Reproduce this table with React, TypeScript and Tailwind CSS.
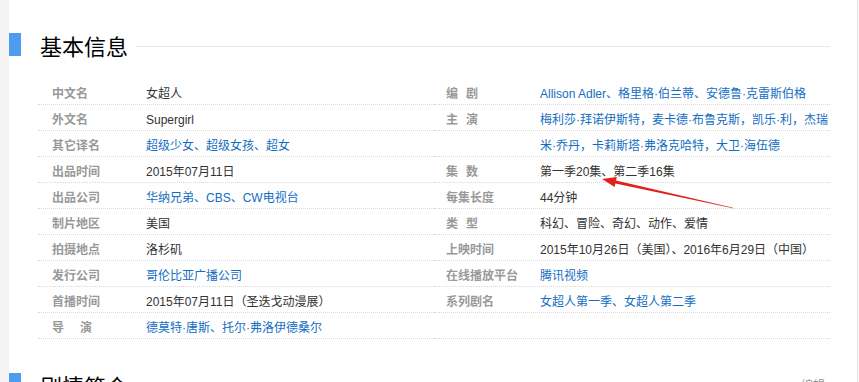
import { ReactNode } from "react";

type Row = { name: string; value: string; link?: boolean; gap?: string };

const leftRows: Row[] = [
  { name: "中文名", value: "女超人" },
  { name: "外文名", value: "Supergirl" },
  { name: "其它译名", value: "超级少女、超级女孩、超女", link: true },
  { name: "出品时间", value: "2015年07月11日" },
  { name: "出品公司", value: "华纳兄弟、CBS、CW电视台", link: true },
  { name: "制片地区", value: "美国" },
  { name: "拍摄地点", value: "洛杉矶" },
  { name: "发行公司", value: "哥伦比亚广播公司", link: true },
  { name: "首播时间", value: "2015年07月11日（圣迭戈动漫展）" },
  { name: "导演", value: "德莫特·唐斯、托尔·弗洛伊德桑尔", link: true, gap: "wide" },
];

const rightRows: Row[] = [
  { name: "编剧", value: "Allison Adler、格里格·伯兰蒂、安德鲁·克雷斯伯格", link: true, gap: "narrow" },
  { name: "主演", value: "梅利莎·拜诺伊斯特，麦卡德·布鲁克斯，凯乐·利，杰瑞", link: true, gap: "narrow" },
  { name: "", value: "米·乔丹，卡莉斯塔·弗洛克哈特，大卫·海伍德", link: true },
  { name: "集数", value: "第一季20集、第二季16集", gap: "narrow" },
  { name: "每集长度", value: "44分钟" },
  { name: "类型", value: "科幻、冒险、奇幻、动作、爱情", gap: "narrow" },
  { name: "上映时间", value: "2015年10月26日（美国）、2016年6月29日（中国）" },
  { name: "在线播放平台", value: "腾讯视频", link: true },
  { name: "系列剧名", value: "女超人第一季、女超人第二季", link: true },
  { name: "", value: "" },
];

const Label = ({ row }: { row: Row }): ReactNode => {
  if (row.gap) {
    return (
      <>
        <span>{row.name[0]}</span>
        <span className={row.gap === "wide" ? "ml-[16px]" : "ml-[8px]"}>{row.name[1]}</span>
      </>
    );
  }
  return <span>{row.name}</span>;
};

const InfoList = ({ rows, labelW }: { rows: Row[]; labelW: string }): ReactNode => (
  <div className="flex flex-col">
    {rows.map((row, i) => (
      <div key={i} className="flex h-[26px] pt-[5px] leading-[20px] border-b border-dotted border-[#d8d8d8] whitespace-nowrap">
        <div className={`${labelW} shrink-0 font-bold text-[#999]`}>
          <Label row={row} />
        </div>
        <div className={row.link ? "text-[#136ec2]" : "text-[#333]"}>{row.value}</div>
      </div>
    ))}
  </div>
);

const Heading = ({ title, edit }: { title: string; edit?: boolean }): ReactNode => (
  <div className="flex items-start">
    <div className="w-[12px] h-[23px] bg-[#4f9cee] shrink-0" />
    <div className="ml-[19px] mt-[3px] text-[22px] leading-[23px] text-black whitespace-nowrap">{title}</div>
    <div className="flex-1 h-px bg-[#e6e6e6] mt-[13px] ml-[8px]" />
    {edit && (
      <div className="ml-[8px] mr-[5px] mt-[6px] flex items-center gap-[2px] text-[12px] leading-[14px] text-[#999] whitespace-nowrap">
        <svg width="10" height="10" viewBox="0 0 10 10">
          <path d="M1 9 L2 6 L7 1 L9 3 L4 8 Z" fill="none" stroke="#aaa" strokeWidth="1" />
        </svg>
        <span>编辑</span>
      </div>
    )}
  </div>
);

const App = (): ReactNode => {
  return (
    <div className="relative w-[859px] h-[382px] overflow-hidden flex bg-white font-['Liberation_Sans','Noto_Sans_CJK_SC',sans-serif] text-[12px]">
      <div className="w-[9px] h-full bg-[#f4f4f4] shrink-0" />
      <div className="flex-1 flex flex-col pr-[27px]">
        <div className="ml-[29px] w-[614px] h-[2px] bg-[#e0e0e0]" />
        <div className="mt-[33px]">
          <Heading title="基本信息" />
        </div>
        <div className="mt-[20px] ml-[29px] grid grid-cols-2">
          <InfoList rows={leftRows} labelW="w-[108px] pl-[14px]" />
          <InfoList rows={rightRows} labelW="w-[106px] pl-[12px]" />
        </div>
        <div className="mt-[34px]">
          <Heading title="剧情简介" edit />
        </div>
      </div>
      <div className="w-px h-full bg-[#e2e2e2] shrink-0" />
      <div className="w-px h-full bg-white shrink-0" />

      <svg className="absolute left-0 top-0 pointer-events-none" width="859" height="382">
        <polygon
          points="602,179 616.8,177.1 616,180.5 733.1,207.7 732.9,208.3 615.4,183.5 614.6,186.9"
          fill="#e3211c"
        />
      </svg>
    </div>
  );
};

export default App;
